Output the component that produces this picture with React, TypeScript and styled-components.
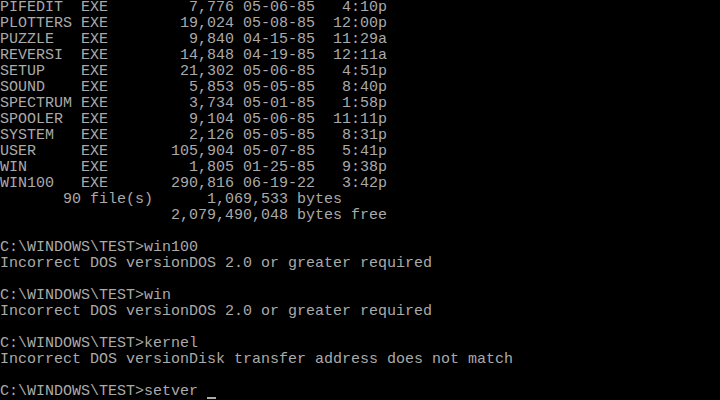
import styled, { createGlobalStyle } from "styled-components";

const GlobalStyle = createGlobalStyle`
    html, body {
        margin: 0;
        padding: 0;
        background: #000;
    }
`

const Screen = styled.div`
    width: 720px;
    height: 400px;
    background: #000;
    color: #aaaaaa;
    font-family: "Liberation Mono", "DejaVu Sans Mono", monospace;
    font-size: 15px;
    overflow: hidden;
`

const Line = styled.pre`
    margin: 0;
    height: 16px;
    line-height: 16px;
    font-family: inherit;
    white-space: pre;
`

const Cursor = styled.span`
    display: inline-block;
    width: 9px;
    height: 2px;
    background: #aaaaaa;
    vertical-align: -4px;
`

const files = [
    ["PIFEDIT", "EXE", "7,776", "05-06-85", "4:10p"],
    ["PLOTTERS", "EXE", "19,024", "05-08-85", "12:00p"],
    ["PUZZLE", "EXE", "9,840", "04-15-85", "11:29a"],
    ["REVERSI", "EXE", "14,848", "04-19-85", "12:11a"],
    ["SETUP", "EXE", "21,302", "05-06-85", "4:51p"],
    ["SOUND", "EXE", "5,853", "05-05-85", "8:40p"],
    ["SPECTRUM", "EXE", "3,734", "05-01-85", "1:58p"],
    ["SPOOLER", "EXE", "9,104", "05-06-85", "11:11p"],
    ["SYSTEM", "EXE", "2,126", "05-05-85", "8:31p"],
    ["USER", "EXE", "105,904", "05-07-85", "5:41p"],
    ["WIN", "EXE", "1,805", "01-25-85", "9:38p"],
    ["WIN100", "EXE", "290,816", "06-19-22", "3:42p"],
]

const dirLine = (f: string[]) =>
    f[0].padEnd(9) + f[1] + f[2].padStart(14) + " " + f[3] + f[4].padStart(8)

const tail = [
    "       90 file(s)      1,069,533 bytes",
    "                   2,079,490,048 bytes free",
    "",
    "C:\\WINDOWS\\TEST>win100",
    "Incorrect DOS versionDOS 2.0 or greater required",
    "",
    "C:\\WINDOWS\\TEST>win",
    "Incorrect DOS versionDOS 2.0 or greater required",
    "",
    "C:\\WINDOWS\\TEST>kernel",
    "Incorrect DOS versionDisk transfer address does not match",
    "",
]

const App = () => {
    return (
        <>
            <GlobalStyle/>
            <Screen>
                {files.map((f) => <Line key={f[0]}>{dirLine(f)}</Line>)}
                {tail.map((t, i) => <Line key={i}>{t}</Line>)}
                <Line>C:\WINDOWS\TEST&gt;setver <Cursor/></Line>
            </Screen>
        </>
    );
}

export default App;
